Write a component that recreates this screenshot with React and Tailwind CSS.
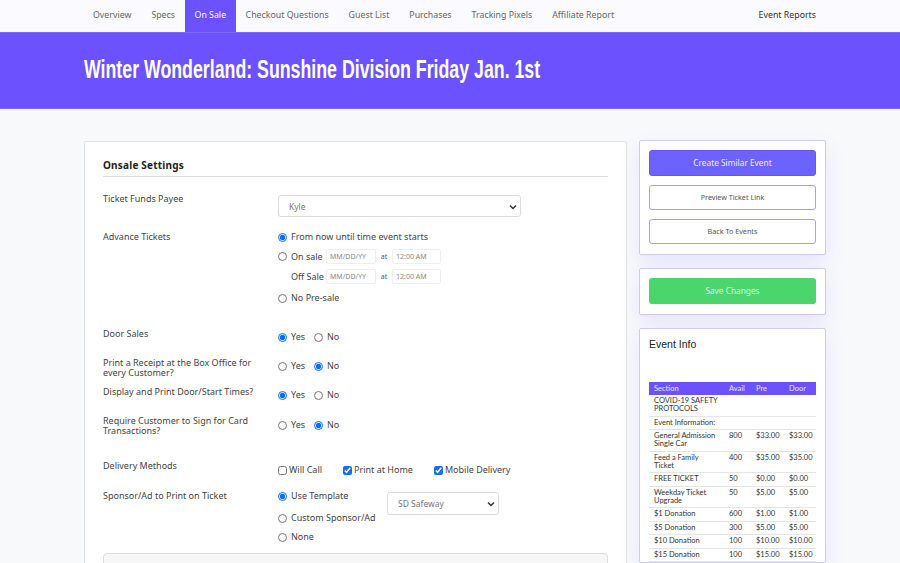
import React from 'react';

const navItems = ['Overview', 'Specs', 'On Sale', 'Checkout Questions', 'Guest List', 'Purchases', 'Tracking Pixels', 'Affiliate Report'];

const tickets = [
  { name: 'COVID-19 SAFETY PROTOCOLS' },
  { name: 'Event Information:' },
  { name: 'General Admission Single Car', avail: '800', pre: '$33.00', door: '$33.00' },
  { name: 'Feed a Family Ticket', avail: '400', pre: '$35.00', door: '$35.00' },
  { name: 'FREE TICKET', avail: '50', pre: '$0.00', door: '$0.00' },
  { name: 'Weekday Ticket Upgrade', avail: '50', pre: '$5.00', door: '$5.00' },
  { name: '$1 Donation', avail: '600', pre: '$1.00', door: '$1.00' },
  { name: '$5 Donation', avail: '300', pre: '$5.00', door: '$5.00' },
  { name: '$10 Donation', avail: '100', pre: '$10.00', door: '$10.00' },
  { name: '$15 Donation', avail: '100', pre: '$15.00', door: '$15.00' },
];

const Radio = ({ checked, label, className = '' }) => (
  <label className={`flex items-center gap-[4px] ${className}`}>
    <input type="radio" readOnly checked={!!checked} className="w-[9px] h-[9px] m-0 accent-[#0d6efd]" />
    <span>{label}</span>
  </label>
);

const Check = ({ checked, label }) => (
  <label className="flex items-center gap-[2px]">
    <input type="checkbox" readOnly checked={!!checked} className="w-[9px] h-[9px] m-0 accent-[#0d6efd]" />
    <span>{label}</span>
  </label>
);

const YesNo = ({ yes }) => (
  <div className="flex gap-[9px] leading-[16px]">
    <Radio checked={yes} label="Yes" />
    <Radio checked={!yes} label="No" />
  </div>
);

const DateTime = () => (
  <>
    <span className="w-[50px] h-[15px] border border-[#eeeeee] rounded-[2px] pl-[3px] text-[7px] leading-[13px] text-[#888888]">MM/DD/YY</span>
    <span className="w-[16px] text-center text-[7px] text-[#555555]">at</span>
    <span className="w-[49px] h-[15px] border border-[#eeeeee] rounded-[2px] pl-[3px] text-[7px] leading-[13px] text-[#888888]">12:00 AM</span>
  </>
);

const App = () => {
  return (
    <div className="w-[900px] h-[563px] overflow-hidden bg-[#f8f9fb] text-[#444444] font-['Noto_Sans','Open_Sans',sans-serif]">
      <nav className="h-[32px] bg-[#fafaff] pl-[83px] pr-[84px] flex items-center justify-between text-[8.8px] text-[#666666]">
        <div className="flex h-full">
          {navItems.map((item) => (
            <a key={item} className={`h-full flex items-center ${item === 'On Sale' ? 'bg-[#6c52ff] text-white px-[9.5px]' : 'px-[10px]'}`}>{item}</a>
          ))}
        </div>
        <a className="text-[#333333]">Event Reports</a>
      </nav>

      <header className="h-[77px] bg-[#6c52ff] border-y border-[#7d68ff] pl-[84px] flex items-center">
        <h1 className="text-[25px] font-bold text-white origin-left scale-x-[0.71] mt-[-2px] whitespace-nowrap font-['Liberation_Sans_Narrow','Liberation_Sans',sans-serif]">Winter Wonderland: Sunshine Division Friday Jan. 1st</h1>
      </header>

      <main className="flex gap-[12px] pl-[84px] pt-[32px] items-start">
        <section className="w-[543px] bg-white border border-[#e3e3e3] rounded-[2px] px-[18px] pt-[16px] text-[9px] leading-[10px]">
          <h2 className="text-[10px] font-bold text-[#222222] leading-[14px] pb-[4px] border-b border-[#dddddd] tracking-[0.2px]">Onsale Settings</h2>

          <div className="flex mt-[15px]">
            <div className="w-[175px] pt-[2px]">Ticket Funds Payee</div>
            <div className="w-[243px] h-[22px] mt-[3px] border border-[#dcdcdc] rounded-[3px] pl-[10px] pt-[2px] flex items-center justify-between pr-[3px] text-[8.5px] text-[#777777]">
              Kyle
              <svg width="8" height="8" viewBox="0 0 16 16" fill="none" stroke="#333" strokeWidth="3"><path d="M2 5l6 6 6-6" /></svg>
            </div>
          </div>

          <div className="flex mt-[14px]">
            <div className="w-[175px] pt-[1px]">Advance Tickets</div>
            <div className="flex flex-col">
              <Radio checked label="From now until time event starts" className="h-[12px]" />
              <div className="flex items-center mt-[6px] h-[15px]">
                <Radio label="On sale" className="w-[48px]" />
                <DateTime />
              </div>
              <div className="flex items-center mt-[5px] h-[15px]">
                <span className="pl-[13px] w-[48px]">Off Sale</span>
                <DateTime />
              </div>
              <Radio label="No Pre-sale" className="mt-[8px] h-[12px]" />
            </div>
          </div>

          <div className="flex mt-[25px]">
            <div className="w-[175px]">Door Sales</div>
            <div className="mt-[-2px] pt-[2px]"><YesNo yes /></div>
          </div>
          <div className="flex mt-[13px]">
            <div className="w-[150px] mr-[25px]">Print a Receipt at the Box Office for every Customer?</div>
            <div><YesNo /></div>
          </div>
          <div className="flex mt-[9px]">
            <div className="w-[175px]">Display and Print Door/Start Times?</div>
            <div className="mt-[-2px] pt-[2px]"><YesNo yes /></div>
          </div>
          <div className="flex mt-[13px]">
            <div className="w-[150px] mr-[25px]">Require Customer to Sign for Card Transactions?</div>
            <div className="mt-[1px]"><YesNo /></div>
          </div>

          <div className="flex mt-[25px]">
            <div className="w-[175px]">Delivery Methods</div>
            <div className="flex gap-[21px] mt-[-2px] pt-[4px] leading-[14px]">
              <Check label="Will Call" />
              <Check checked label="Print at Home" />
              <Check checked label="Mobile Delivery" />
            </div>
          </div>

          <div className="flex mt-[14px]">
            <div className="w-[175px]">Sponsor/Ad to Print on Ticket</div>
            <div className="flex flex-col w-[109px] mt-[-1px]">
              <Radio checked label="Use Template" className="h-[12px]" />
              <Radio label="Custom Sponsor/Ad" className="h-[12px] mt-[10px]" />
              <Radio label="None" className="h-[12px] mt-[7px]" />
            </div>
            <div className="w-[112px] h-[23px] mt-[1px] border border-[#dcdcdc] rounded-[3px] pl-[10px] pr-[3px] flex items-center justify-between text-[8.5px] text-[#777777]">
              SD Safeway
              <svg width="8" height="8" viewBox="0 0 16 16" fill="none" stroke="#333" strokeWidth="3"><path d="M2 5l6 6 6-6" /></svg>
            </div>
          </div>

          <div className="h-[60px] mt-[10px] bg-[#f7f7f7] border border-[#dddddd] rounded-[4px]" />
        </section>

        <aside className="w-[187px] flex flex-col gap-[13px] mt-[-1px]">
          <div className="bg-white border border-[#cfc8ff] rounded-[2px] px-[9px] pt-[9px] pb-[10px] shadow-[0_8px_20px_rgba(108,82,255,0.12)] flex flex-col">
            <button className="h-[26px] bg-[#6c63ff] border border-[#6c52ff] rounded-[3px] text-[8.3px] text-[#efedff]">Create Similar Event</button>
            <button className="h-[25px] mt-[9px] bg-white border border-[#a99bff] rounded-[3px] text-[7.2px] text-[#555555]">Preview Ticket Link</button>
            <button className="h-[25px] mt-[9px] bg-white border border-[#a99bff] rounded-[3px] text-[7.2px] text-[#555555]">Back To Events</button>
          </div>
          <div className="bg-white border border-[#cfc8ff] rounded-[2px] px-[9px] pt-[9px] pb-[10px] shadow-[0_8px_20px_rgba(108,82,255,0.12)]">
            <button className="block w-full h-[26px] bg-[#4ad66d] rounded-[3px] text-[8.3px] text-[#d8f8e0]">Save Changes</button>
          </div>
          <div className="bg-white border border-[#cfc8ff] rounded-[2px] px-[9px] pt-[9px] shadow-[0_8px_20px_rgba(108,82,255,0.12)]">
            <h3 className="text-[10.5px] leading-[12px] text-[#222222] font-['Liberation_Sans',sans-serif]">Event Info</h3>
            <table className="w-[167px] mt-[32px] text-[7.5px] leading-[8px] text-[#333333] table-fixed font-['Lato','Noto_Sans',sans-serif]">
              <thead>
                <tr className="bg-[#6c52ff] text-[#e8e4ff] h-[13px]">
                  <th className="font-normal text-left pl-[5px] w-[80px]">Section</th>
                  <th className="font-normal text-left w-[27px]">Avail</th>
                  <th className="font-normal text-left w-[33px]">Pre</th>
                  <th className="font-normal text-left">Door</th>
                </tr>
              </thead>
              <tbody>
                {tickets.map((t) => (
                  <tr key={t.name} className="border-b border-[#e4e4e4] align-top">
                    {t.avail ? (
                      <>
                        <td className="pl-[5px] py-[2.25px] pr-[12px]">{t.name}</td>
                        <td className="py-[2.25px]">{t.avail}</td>
                        <td className="py-[2.25px]">{t.pre}</td>
                        <td className="py-[2.25px]">{t.door}</td>
                      </>
                    ) : (
                      <td colSpan={4} className="pl-[5px] py-[2.25px]"><div className="w-[75px]">{t.name}</div></td>
                    )}
                  </tr>
                ))}
              </tbody>
            </table>
          </div>
        </aside>
      </main>
    </div>
  );
};

export default App;
